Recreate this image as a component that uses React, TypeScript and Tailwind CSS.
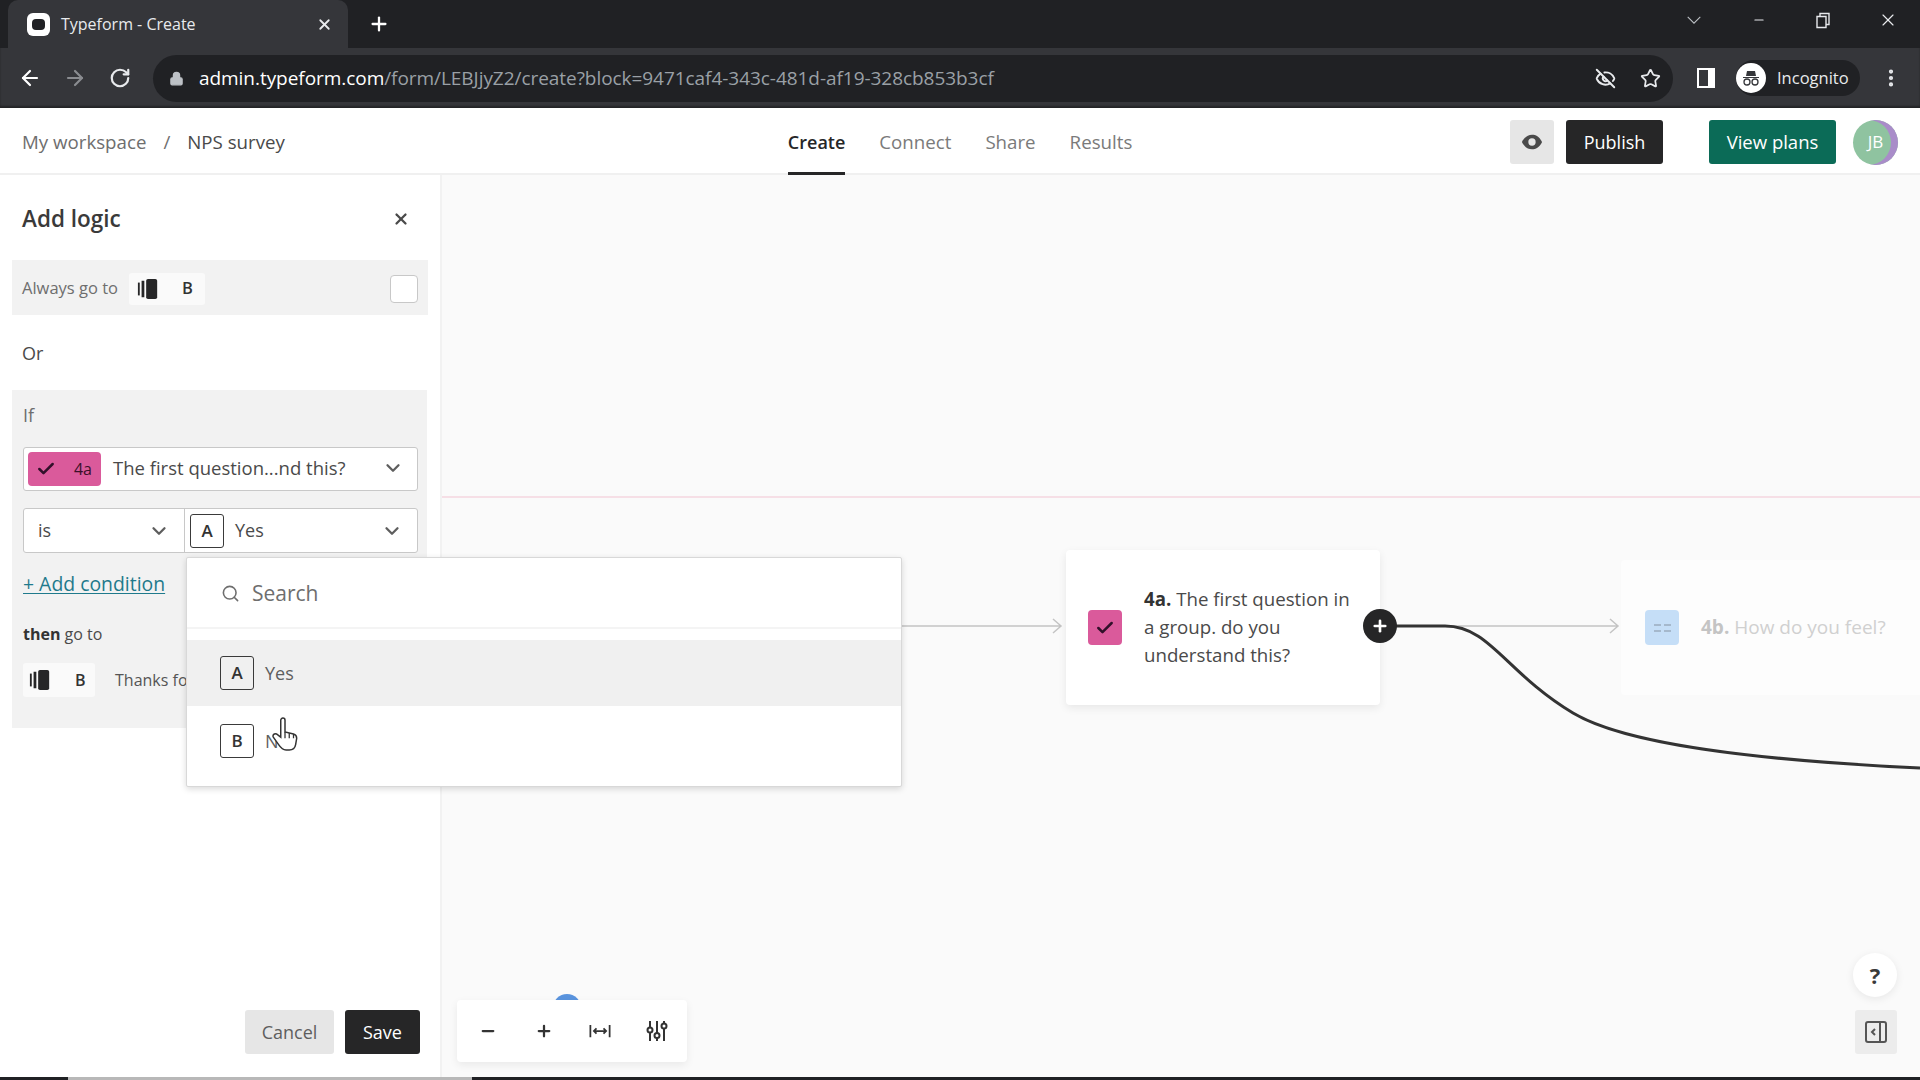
import React from "react";
import { ArrowLeft, ArrowRight, RotateCw, Lock, EyeOff, Star, MoreVertical, Search, ChevronDown, X, Plus, Check, Minus } from "lucide-react";

const TfIcon = ({ className = "" }: { className?: string }) => (
  <svg viewBox="0 0 22 24" className={className}>
    <rect x="0" y="5" width="2" height="14" fill="#262627" />
    <rect x="4" y="3" width="3" height="18" fill="#262627" />
    <rect x="9" y="1" width="12" height="22" rx="2" fill="#262627" />
  </svg>
);

const Key = ({ l, dim = false }: { l: string; dim?: boolean }) => (
  <span className={`flex h-[34px] w-[34px] items-center justify-center rounded-[3px] border border-[#3a3a3a] text-[17px] font-semibold text-[#333] ${dim ? "bg-[#f0f0f0]" : "bg-white"}`}>{l}</span>
);

const Chevron = ({ className = "" }: { className?: string }) => <ChevronDown className={`h-[22px] w-[22px] text-[#5e5e5e] ${className}`} strokeWidth={2.5} />;

function TabBar() {
  return (
    <div className="flex h-12 items-center bg-[#202124] text-white">
      <div className="ml-2 flex h-12 w-[340px] items-center rounded-t-[10px] bg-[#35363a] pl-[19px] pr-[15px]">
        <span className="flex h-[23px] w-[23px] items-center justify-center rounded-md bg-white">
          <span className="h-[11px] w-[13px] rounded-sm bg-[#202124]" />
        </span>
        <span className="ml-[11px] flex-1 text-[16px] text-[#e8eaed]">Typeform - Create</span>
        <X className="h-[17px] w-[17px] text-[#e8eaed]" strokeWidth={2.5} />
      </div>
      <Plus className="ml-[20px] h-[22px] w-[22px] text-white" strokeWidth={2.5} />
      <div className="mb-[8px] ml-auto flex items-center">
        <svg viewBox="0 0 16 10" className="mr-[50px] h-[9px] w-[16px]"><path d="M1 1l7 7 7-7" fill="none" stroke="#bdc1c6" strokeWidth="1.2" /></svg>
        <Minus className="mr-[50px] h-[14px] w-[14px] text-[#e8eaed]" />
        <svg viewBox="0 0 14 16" className="mr-[48px] h-[17px] w-[14px]"><path d="M1 4h9v11H1zM4 4V1h9v11h-3" fill="none" stroke="#e8eaed" strokeWidth="1.4" /></svg>
        <X className="mr-[22px] h-[20px] w-[20px] text-[#e8eaed]" strokeWidth={1.4} />
      </div>
    </div>
  );
}

function Toolbar() {
  return (
    <div className="flex h-[60px] items-center bg-[#35363a] text-[#e8eaed] shadow-[inset_0_-2px_2px_rgba(0,0,0,0.35)]">
      <ArrowLeft className="ml-[18px] h-6 w-6 text-white" strokeWidth={2.2} />
      <ArrowRight className="ml-[21px] h-6 w-6 text-[#8a8c90]" strokeWidth={2.2} />
      <RotateCw className="ml-[22px] h-[22px] w-[22px] text-[#e8eaed]" strokeWidth={2.4} />
      <div className="ml-[22px] flex h-[47px] w-[1520px] items-center rounded-full bg-[#202124]">
        <Lock className="ml-[16px] h-[15px] w-[15px] fill-[#bdc1c6] text-[#bdc1c6]" />
        <span className="ml-[15px] font-['Open_Sans',sans-serif] text-[19px] tracking-[-0.05px] text-white">
          admin.typeform.com<span className="text-[#9aa0a6]">/form/LEBJjyZ2/create?block=9471caf4-343c-481d-af19-328cb853b3cf</span>
        </span>
        <EyeOff className="ml-auto h-[21px] w-[21px] text-[#e8eaed]" strokeWidth={2.2} />
        <Star className="ml-[24px] mr-[12px] h-[21px] w-[21px] text-[#e8eaed]" strokeWidth={2} />
      </div>
      <span className="ml-[24px] h-[20px] w-[18px] border-[2px] border-r-[7px] border-white" />
      <div className="ml-[21px] flex h-[36px] w-[124px] items-center rounded-full bg-[#202124]">
        <span className="flex h-[30px] w-[30px] items-center justify-center rounded-full bg-white">
          <svg viewBox="0 0 20 20" className="h-[20px] w-[20px]"><path d="M6 3h8l1 5H5z M2 9h16v1H2z" fill="#35363a" /><circle cx="6" cy="14" r="3" fill="none" stroke="#35363a" strokeWidth="1.3" /><circle cx="14" cy="14" r="3" fill="none" stroke="#35363a" strokeWidth="1.3" /></svg>
        </span>
        <span className="ml-[11px] text-[16.5px] text-[#e8eaed]">Incognito</span>
      </div>
      <MoreVertical className="ml-[20px] h-[22px] w-[22px] text-[#e8eaed]" strokeWidth={2.6} />
    </div>
  );
}

function AppHeader() {
  return (
    <div className="relative flex h-[67px] items-center border-b-2 border-[#f0f0f0] bg-white pl-[22px] pt-[3px] text-[18.7px]">
      <span className="text-[#6e6e6e]">My workspace</span>
      <span className="mx-[17px] text-[#6e6e6e]">/</span>
      <span className="text-[#4a4a4a]">NPS survey</span>
      <div className="ml-[503px] flex h-full items-center gap-[34px] text-[18.7px] font-medium text-[#7a7a7a]">
        <span className="relative flex h-full items-center text-[18px] font-semibold text-[#262627]">Create<span className="absolute bottom-[-2px] left-0 right-0 h-[3px] bg-[#262627]" /></span>
        <span>Connect</span>
        <span>Share</span>
        <span>Results</span>
      </div>
      <div className="ml-auto mr-[22px] flex items-center">
        <span className="flex h-11 w-[44px] items-center justify-center rounded-[3px] bg-[#e6e6e6]">
          <svg viewBox="0 0 24 24" className="h-[22px] w-[22px]"><path d="M1 12C4 6 8 4 12 4s8 2 11 8c-3 6-7 8-11 8S4 18 1 12z" fill="#4a4a4a" /><circle cx="12" cy="12" r="4" fill="#e6e6e6" /></svg>
        </span>
        <span className="ml-[12px] flex h-11 w-[97px] items-center justify-center rounded-[3px] bg-[#262627] text-[18px] font-medium text-white">Publish</span>
        <span className="ml-[46px] flex h-11 w-[127px] items-center justify-center rounded-[3px] bg-[#0b6b57] text-[18.5px] font-medium text-white">View plans</span>
        <span className="ml-[17px] flex h-[45px] w-[45px] items-center justify-center overflow-hidden rounded-full bg-[#8fc3a0] text-[17px] font-medium text-white shadow-[inset_-7px_0_0_#a98cc9]">JB</span>
      </div>
    </div>
  );
}

function Panel() {
  return (
    <div className="flex h-full w-[442px] shrink-0 flex-col border-r-2 border-[#f2f2f2] bg-white">
      <div className="flex h-[85px] shrink-0 items-center justify-between pl-[22px] pr-[30px] pt-[2px]">
        <span className="text-[22.5px] font-semibold text-[#3a3a3a]">Add logic</span>
        <X className="h-[18px] w-[18px] text-[#4a4a4a]" strokeWidth={3} />
      </div>
      <div className="ml-[12px] flex h-[55px] w-[416px] shrink-0 items-center bg-[#f2f2f2] pl-[10px] pr-[10px] pt-[2px] text-[16.5px] text-[#6e6e6e]">
        <span>Always go to</span>
        <span className="ml-[11px] flex h-[32px] w-[76px] items-center rounded-[3px] bg-[#fafafa] pl-[8px]">
          <TfIcon className="h-[22px] w-[22px]" />
          <span className="ml-[23px] font-semibold text-[#333]">B</span>
        </span>
        <span className="ml-auto h-[28px] w-[28px] rounded-[4px] border border-[#c8c8c8] bg-white" />
      </div>
      <div className="flex h-[75px] shrink-0 items-center pl-[22px] pt-[1px] text-[18px] text-[#4a4a4a]">Or</div>
      <div className="ml-[12px] h-[338px] w-[415px] shrink-0 bg-[#f2f2f2] pl-[11px] pr-[10px]">
        <div className="flex h-[57px] items-center pb-[7px] text-[18px] text-[#6e6e6e]">If</div>
        <div className="flex h-[44px] w-[395px] items-center rounded-[3px] border border-[#c8c8c8] bg-white pl-[4px] pr-[13px]">
          <span className="flex h-[34px] w-[73px] items-center justify-between rounded-[4px] bg-[#da5a9b] pl-[8px] pr-[9px] text-[16px] font-medium text-[#3a1029]">
            <Check className="h-[20px] w-[20px] text-[#32102a]" strokeWidth={3} />4a
          </span>
          <span className="ml-[12px] flex-1 pb-[2px] text-[18.5px] text-[#4a4a4a]">The first question...nd this?</span>
          <Chevron className="mb-[2px]" />
        </div>
        <div className="mt-[17px] flex h-[45px] w-[395px] rounded-[3px] border border-[#c8c8c8] bg-white">
          <div className="flex w-[161px] items-center border-r border-[#c8c8c8] pl-[14px] pr-[14px] text-[18px] text-[#4a4a4a]">
            <span className="flex-1">is</span><Chevron />
          </div>
          <div className="flex flex-1 items-center pl-[5px] pr-[14px] text-[18px] text-[#4a4a4a]">
            <Key l="A" />
            <span className="ml-[11px] flex-1">Yes</span>
            <Chevron />
          </div>
        </div>
        <div className="mt-[18px] text-[19.4px] leading-[26px]"><span className="text-[#1f7a8c] underline underline-offset-2">+ Add condition</span></div>
        <div className="mt-[24px] text-[16px] leading-[26px] text-[#4a4a4a]"><span className="font-bold text-[#333]">then</span> go to</div>
        <div className="mt-[16px] flex h-[34px] items-center text-[16px] text-[#555]">
          <span className="flex h-[34px] w-[72px] items-center rounded-[3px] bg-[#fafafa] pl-[6px]">
            <TfIcon className="h-[22px] w-[22px]" />
            <span className="ml-[24px] font-semibold text-[#333]">B</span>
          </span>
          <span className="ml-[20px]">Thanks for</span>
        </div>
      </div>
      <div className="mt-auto flex justify-end gap-[11px] pb-[23px] pr-[20px]">
        <span className="flex h-11 w-[89px] items-center justify-center rounded-[3px] bg-[#e6e6e6] text-[18px] text-[#5e5e5e]">Cancel</span>
        <span className="flex h-11 w-[75px] items-center justify-center rounded-[3px] bg-[#262627] text-[18px] font-medium text-white">Save</span>
      </div>
    </div>
  );
}

function Canvas() {
  return (
    <div className="relative flex-1 overflow-hidden bg-[#fafafa]">
      <div className="absolute left-0 right-0 top-[321px] h-[2px] bg-[#f6dfe6]" />
      <svg className="absolute left-0 top-0" width="1478" height="902" viewBox="442 175 1478 902">
        <g fill="none" stroke="#c4c4c4" strokeWidth="1.5">
          <path d="M901 626H1060M1053 619l8 7-8 7" />
          <path d="M1440 626H1618M1610 619l8 7-8 7" />
        </g>
        <path d="M1380 626H1445C1490 626 1505 672 1573 713C1625 744 1750 760 1920 768" fill="none" stroke="#333" strokeWidth="3" />
      </svg>
      {/* 4a node */}
      <div className="absolute left-[624px] top-[375px] flex h-[155px] w-[314px] items-center rounded-[4px] bg-white pl-[22px] shadow-[0_3px_8px_rgba(0,0,0,0.08)]">
        <span className="flex h-[35px] w-[34px] shrink-0 items-center justify-center rounded-[4px] bg-[#da5a9b]">
          <Check className="h-[20px] w-[20px] text-[#32102a]" strokeWidth={3} />
        </span>
        <p className="ml-[22px] w-[212px] pb-[2px] text-[18.7px] leading-[28px] text-[#4a4a4a]"><b className="font-bold text-[#333]">4a.</b> The first question in a group. do you understand this?</p>
      </div>
      <span className="absolute left-[921px] top-[434px] flex h-[34px] w-[34px] items-center justify-center rounded-full bg-[#262627]">
        <Plus className="h-[18px] w-[18px] text-white" strokeWidth={3.5} />
      </span>
      {/* 4b node */}
      <div className="absolute left-[1179px] top-[385px] flex h-[135px] w-[320px] items-center rounded-[4px] bg-[#fdfdfd] pl-[24px]">
        <span className="flex h-[35px] w-[34px] shrink-0 flex-col items-center justify-center gap-[4px] rounded-[4px] bg-[#c5def7]">
          <span className="flex gap-[3px]"><span className="h-[2px] w-[7px] bg-[#a5b8cc]" /><span className="h-[2px] w-[7px] bg-[#a5b8cc]" /></span>
          <span className="flex gap-[3px]"><span className="h-[2px] w-[7px] bg-[#a5b8cc]" /><span className="h-[2px] w-[7px] bg-[#a5b8cc]" /></span>
        </span>
        <p className="ml-[22px] whitespace-nowrap text-[19px] text-[#d0d0d0]"><b className="font-bold text-[#c4c4c4]">4b.</b> How do you feel?</p>
      </div>
      {/* zoom toolbar */}
      <span className="absolute left-[111px] top-[819px] h-[20px] w-[28px] rounded-t-full bg-[#5a94de]" />
      <div className="absolute left-[15px] top-[825px] flex h-[62px] w-[230px] items-center rounded-[4px] bg-white pl-[22px] text-[#333] shadow-[0_3px_8px_rgba(0,0,0,0.07)]">
        <Minus className="h-[18px] w-[18px]" strokeWidth={3} />
        <Plus className="ml-[38px] h-[18px] w-[18px]" strokeWidth={3} />
        <svg viewBox="0 0 24 16" className="ml-[36px] h-[14px] w-[22px]"><path d="M1 1v14M23 1v14M5 8h14M8 5L5 8l3 3M16 5l3 3-3 3" fill="none" stroke="#333" strokeWidth="2" /></svg>
        <svg viewBox="0 0 22 22" className="ml-[35px] h-[22px] w-[22px]"><g fill="none" stroke="#333" strokeWidth="2"><path d="M4 1v6M4 13v8M11 1v12M11 18v3M18 1v2M18 9v12" /><circle cx="4" cy="10" r="2.5" /><circle cx="11" cy="15.5" r="2.5" /><circle cx="18" cy="6" r="2.5" /></g></svg>
      </div>
      {/* help and collapse */}
      <span className="absolute left-[1411px] top-[778px] flex h-11 w-11 items-center justify-center rounded-full bg-white text-[22px] font-bold text-[#3a3a3a] shadow-[0_2px_8px_rgba(0,0,0,0.08)]">?</span>
      <span className="absolute left-[1413px] top-[835px] flex h-11 w-[42px] items-center justify-center rounded-[3px] bg-[#ececec]">
        <svg viewBox="0 0 22 22" className="h-[22px] w-[22px]"><rect x="1" y="1" width="20" height="20" rx="2" fill="none" stroke="#555" strokeWidth="2" /><path d="M15 1v20M10 8l-3 3 3 3" fill="none" stroke="#555" strokeWidth="2" /></svg>
      </span>
    </div>
  );
}

function Dropdown() {
  return (
    <div className="absolute left-[186px] top-[557px] h-[230px] w-[716px] rounded-[2px] border border-[#d8d8d8] bg-white shadow-[0_2px_6px_rgba(0,0,0,0.15)]">
      <div className="flex h-[71px] items-center border-b-2 border-[#f4f4f4] pl-[34px] pt-[2px] text-[21px] text-[#6e6e6e]">
        <Search className="h-[19px] w-[19px] text-[#6e6e6e]" strokeWidth={2} />
        <span className="ml-[12px]">Search</span>
      </div>
      <div className="mt-[11px] flex h-[66px] items-center bg-[#f0f0f0] pl-[33px] text-[18px] text-[#5e5e5e]">
        <Key l="A" dim /><span className="ml-[11px]">Yes</span>
      </div>
      <div className="mt-[18px] flex h-[34px] items-center pl-[33px] text-[18px] text-[#5e5e5e]">
        <Key l="B" /><span className="ml-[11px]">No</span>
      </div>
      <svg viewBox="0 0 24 32" className="absolute left-[85px] top-[159px] h-[34px] w-[26px]">
        <path d="M8 3a2 2 0 0 1 4 0v11l8 2c2 .5 3 2 3 4l-1 6c-.5 3-3 5-6 5h-3c-3 0-5-2-7-5l-5-7c-1-2 1-4 3-3l4 3z" fill="#fff" stroke="#333" strokeWidth="1.4" />
        <path d="M12 14v6M16 15v5M20 16v4" stroke="#333" strokeWidth="1.2" />
      </svg>
    </div>
  );
}

export default function App() {
  return (
    <div className="relative flex h-[1080px] w-[1920px] flex-col overflow-hidden bg-white font-['Open_Sans',sans-serif]">
      <TabBar />
      <Toolbar />
      <AppHeader />
      <div className="flex min-h-0 flex-1">
        <Panel />
        <Canvas />
      </div>
      <div className="flex h-[3px] shrink-0">
        <span className="w-[68px] bg-[#202124]" />
        <span className="w-[404px] bg-[#b8b8b8]" />
        <span className="flex-1 bg-[#202124]" />
      </div>
      <Dropdown />
    </div>
  );
}
